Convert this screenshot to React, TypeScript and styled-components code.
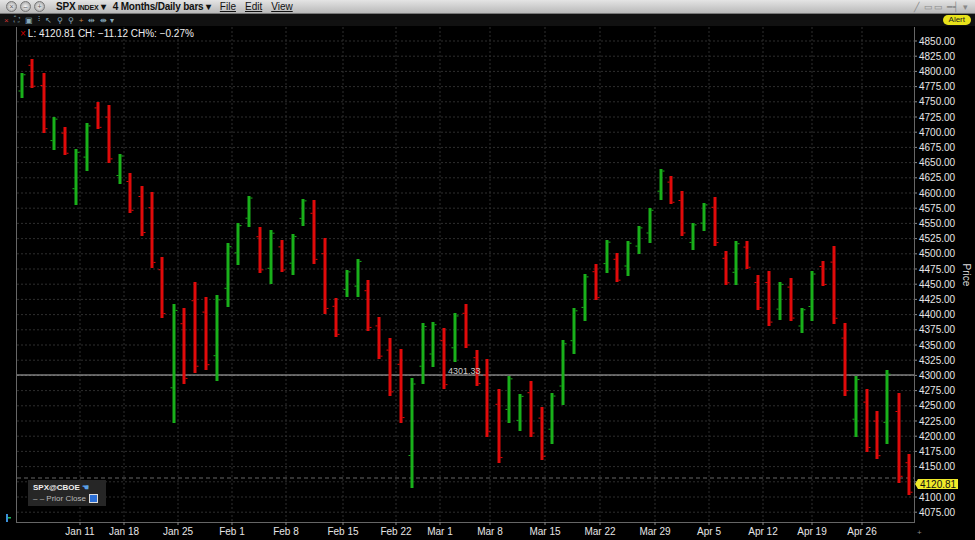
import React from "react";
import styled, { createGlobalStyle } from "styled-components";

const Global = createGlobalStyle`
  html, body { margin: 0; padding: 0; background: #000; overflow: hidden; }
  body { font-family: "Liberation Sans", Arial, sans-serif; }
`;

const Page = styled.div`
  width: 975px; height: 540px; display: flex; flex-direction: column; background: #000;
`;
const TitleBar = styled.div`
  height: 13px; display: flex; align-items: center; gap: 3px; padding: 0 6px;
  background: linear-gradient(#e4e4e4, #b9b9b9); border-bottom: 1px solid #777;
  font-size: 10px; color: #111;
`;
const WinBtn = styled.span`
  width: 9px; height: 9px; border-radius: 50%; background: radial-gradient(#f4f4f4, #9a9a9a);
  border: 1px solid #777; display: inline-flex; align-items: center; justify-content: center;
  font-size: 7px; line-height: 1; color: #555;
`;
const Menu = styled.span<{ $bold?: boolean; $ml?: number }>`
  font-weight: ${p => (p.$bold ? 700 : 400)}; margin-left: ${p => p.$ml ?? 0}px;
  text-decoration: ${p => (p.$bold ? "none" : "underline")}; text-decoration-thickness: 0.5px;
  white-space: nowrap; letter-spacing: ${p => (p.$bold ? "-0.2px" : "0")};
`;
const Small = styled.span` font-size: 7px; `;
const Spacer = styled.div` flex: 1; `;
const RightIcons = styled.span` color: #888; font-size: 9px; letter-spacing: 1px; `;
const Toolbar = styled.div`
  height: 12px; display: flex; align-items: center; gap: 5px; padding: 0 4px; background: #111;
  font-size: 8px; color: #8ab;
`;
const Alert = styled.span`
  margin-left: auto; background: #e8e21a; color: #222; font-size: 8px; padding: 0 6px;
  border-radius: 5px; line-height: 10px;
`;
const ChartArea = styled.div` position: relative; flex: 1; `;
const Readout = styled.div`
  position: absolute; left: 20px; top: 2px; font-size: 10px; color: #eee; white-space: nowrap;
  & b { color: #c00; font-weight: 400; margin-right: 2px; }
`;
const Legend = styled.div`
  position: absolute; left: 28px; top: 454px; width: 68px; padding: 3px 5px; background: #262626;
  font-size: 8px; color: #ddd; display: flex; flex-direction: column; gap: 2px;
`;
const LegendTitle = styled.span` font-weight: 700; color: #eee; `;
const LegendRow = styled.span` display: flex; align-items: center; gap: 3px; color: #bbb; `;
const Check = styled.span`
  width: 7px; height: 7px; background: #2c6fd6; border: 1px solid #ddd; display: inline-block;
`;

type Bar = [number, number, number, "g" | "r"];
const bars: Bar[] = [
  [22,73,98,"g"],[32,59,88,"r"],[44,73,133,"r"],[54,117,150,"g"],[65,127,155,"r"],[76,149,205,"g"],
  [87,123,171,"g"],[98,102,129,"r"],[109,105,163,"r"],[120,154,184,"g"],[130,173,213,"r"],[142,186,236,"r"],
  [152,192,268,"r"],[162,257,318,"r"],[174,304,423,"g"],[184,308,384,"r"],[195,282,373,"r"],[206,297,370,"r"],
  [217,295,381,"g"],[228,243,307,"g"],[238,223,265,"g"],[249,196,227,"g"],[260,227,273,"r"],[271,230,284,"g"],
  [282,240,272,"r"],[293,234,275,"g"],[303,199,226,"g"],[314,200,264,"r"],[325,238,314,"r"],[336,298,337,"r"],
  [347,270,297,"g"],[358,259,297,"g"],[368,280,331,"r"],[379,317,359,"r"],[390,338,396,"r"],[401,349,423,"r"],
  [412,378,488,"g"],[423,323,384,"g"],[433,322,367,"g"],[444,328,389,"r"],[455,313,362,"g"],[466,304,348,"r"],
  [477,350,386,"r"],[487,359,437,"r"],[499,389,463,"r"],[509,376,423,"g"],[520,394,431,"g"],[531,381,437,"r"],
  [542,407,460,"r"],[552,393,444,"g"],[563,340,405,"g"],[574,308,354,"g"],[585,274,321,"g"],[596,264,300,"r"],
  [607,240,273,"g"],[617,253,282,"r"],[628,241,276,"g"],[639,226,254,"g"],[650,208,243,"g"],[661,169,200,"g"],
  [671,176,204,"r"],[682,191,236,"r"],[693,223,250,"g"],[704,203,231,"g"],[715,197,246,"r"],[726,251,285,"r"],
  [736,241,285,"g"],[747,241,269,"r"],[758,275,310,"r"],[769,271,326,"r"],[780,282,320,"g"],[791,278,321,"r"],
  [802,308,333,"g"],[812,271,321,"g"],[823,261,286,"r"],[834,246,324,"r"],[845,323,396,"r"],[856,376,437,"g"],
  [867,389,452,"r"],[877,411,459,"r"],[887,370,444,"g"],[899,393,483,"r"],[909,454,495,"r"],
];
const prices = Array.from({ length: 32 }, (_, i) => 4850 - i * 25);
const yOf = (p: number) => 41 + (4850 - p) * 0.608;
const dates: [string, number][] = [
  ["Jan 11",80],["Jan 18",124],["Jan 25",178],["Feb 1",232],["Feb 8",286],["Feb 15",343],["Feb 22",396],
  ["Mar 1",440],["Mar 8",490],["Mar 15",545],["Mar 22",600],["Mar 29",655],["Apr 5",709],["Apr 12",763],
  ["Apr 19",812],["Apr 26",862],
];

function Chart() {
  return (
    <svg width="975" height="514" viewBox="0 26 975 514" style={{ display: "block" }}>
      <g stroke="#2e2e2e" strokeWidth="1" strokeDasharray="2 2">
        {prices.map(p => <line key={p} x1="17" x2="914" y1={yOf(p)} y2={yOf(p)} />)}
        {dates.map(([d, x]) => <line key={d} x1={x} x2={x} y1="27" y2="522" />)}
      </g>
      <line x1="16.5" x2="16.5" y1="27" y2="522" stroke="#666" />
      <line x1="16" x2="915" y1="522.5" y2="522.5" stroke="#666" />
      <line x1="914.5" x2="914.5" y1="27" y2="522" stroke="#666" />
      <line x1="17" x2="914" y1="375" y2="375" stroke="#bbb" strokeWidth="1" />
      <line x1="17" x2="914" y1="478" y2="478" stroke="#666" strokeDasharray="4 3" />
      {bars.map(([x, t, b, c], i) => {
        const col = c === "g" ? "#19b01a" : "#e00a0a";
        const h = b - t;
        const o = c === "g" ? b - h * 0.3 : t + h * 0.2;
        const cl = c === "g" ? t + h * 0.05 : b - h * 0.08;
        return (
          <g key={i} fill={col}>
            <rect x={x - 1.5} y={t} width="3" height={h} />
            <rect x={x - 3.5} y={o} width="2" height="1" />
            <rect x={x + 1.5} y={cl} width="2" height="1" />
          </g>
        );
      })}
      <text x="448" y="374" fill="#ccc" fontSize="9" fontFamily="Liberation Sans">4301.33</text>
      <g fill="#e6e6e6" fontSize="10" fontFamily="Liberation Sans">
        {prices.map(p => (
          <g key={p}>
            <line x1="915" x2="917" y1={yOf(p)} y2={yOf(p)} stroke="#888" />
            {Math.abs(yOf(p) - 484) > 8 && <text x="919" y={yOf(p) + 3.5}>{p.toFixed(2)}</text>}
          </g>
        ))}
        {dates.map(([d, x]) => (
          <g key={d}>
            <line x1={x} x2={x} y1="522" y2="525" stroke="#888" />
            <text x={x} y="535" textAnchor="middle">{d}</text>
          </g>
        ))}
      </g>
      <text x="963" y="275" fill="#ddd" fontSize="10" fontFamily="Liberation Sans" transform="rotate(90 963 275)" textAnchor="middle">Price</text>
      <path d="M915 484 l3 -5 h40 v10 h-40 z" fill="#f0ea2a" />
      <text x="920" y="488" fill="#111" fontSize="10" fontFamily="Liberation Sans">4120.81</text>
      <rect x="6" y="514" width="2" height="8" fill="#3a8fd8" />
      <rect x="8" y="517" width="3" height="1.5" fill="#1cb85a" />
      <text x="917" y="535" fill="#888" fontSize="8">+</text>
    </svg>
  );
}

export default function App() {
  return (
    <Page>
      <Global />
      <TitleBar>
        <WinBtn>×</WinBtn><WinBtn>–</WinBtn><WinBtn>+</WinBtn>
        <Menu $bold $ml={8}>SPX <Small>INDEX</Small> ▾</Menu>
        <Menu $bold $ml={4}>4 Months/Daily bars ▾</Menu>
        <Menu $ml={6}>File</Menu>
        <Menu $ml={6}>Edit</Menu>
        <Menu $ml={6}>View</Menu>
        <Spacer />
        <RightIcons>╱ ▭▭ ━┥ ▾</RightIcons>
      </TitleBar>
      <Toolbar>
        <span style={{ color: "#c33" }}>×</span><span>⛶</span><span>▣</span><span>⫶</span><span>↖</span>
        <span>⚲</span><span>⚲</span><span style={{ color: "#c84" }}>+</span><span>⇹</span><span>⇼ ▾</span>
        <Alert>Alert</Alert>
      </Toolbar>
      <ChartArea>
        <Chart />
        <Readout><b>×</b>L: 4120.81 CH: −11.12 CH%: −0.27%</Readout>
        <Legend>
          <LegendTitle>SPX@CBOE <span style={{ color: "#5aa0e8" }}>☚</span></LegendTitle>
          <LegendRow>– – Prior Close <Check /></LegendRow>
        </Legend>
      </ChartArea>
    </Page>
  );
}
